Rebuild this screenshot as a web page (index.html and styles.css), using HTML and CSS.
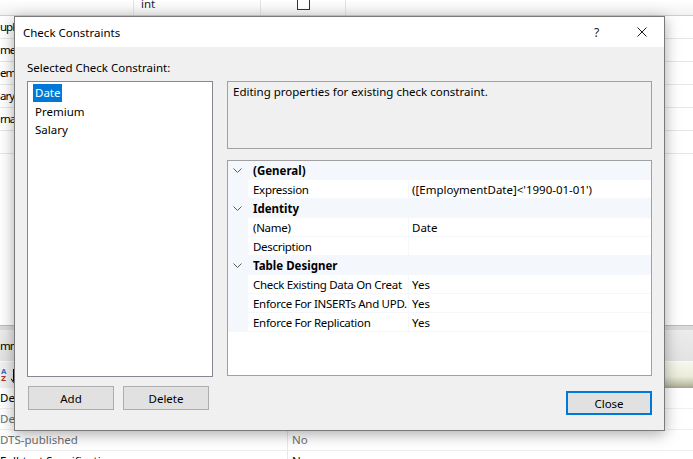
FILE: index.html
```html
<!DOCTYPE html>
<html>
<head>
<meta charset="utf-8">
<link rel="stylesheet" href="styles.css">
</head>
<body>
<div class="screen">
  <div class="bg">
    <div class="bg-top">
      <div class="tc tc1"></div>
      <div class="tc tc2"><span class="int">int</span></div>
      <div class="tc tc3"><span class="chk"></span></div>
      <div class="tc tc4"></div>
    </div>
    <div class="names">
      <div class="nrow">uplo</div>
      <div class="nrow">me</div>
      <div class="nrow">emi</div>
      <div class="nrow">ary</div>
      <div class="nrow">rna</div>
      <div class="nrow"></div>
    </div>
    <div class="blank"></div>
    <div class="sep"></div>
    <div class="tabrow"><span class="tabtext">mn</span></div>
    <div class="toolrow">
      <div class="tool-left">
        <span class="az"><span class="az-a">A</span><span class="az-z">Z</span></span>
        <svg class="az-arrow" width="5" height="14" viewBox="0 0 5 14"><path d="M2.5 0V12" stroke="#000" stroke-width="1"/><path d="M0 9.5L2.5 13.5L5 9.5" fill="none" stroke="#000" stroke-width="1"/></svg>
      </div>
      <div class="tool-right"></div>
    </div>
    <div class="props">
      <div class="prow"><span class="pl">Des</span><span class="pv"></span></div>
      <div class="prow muted"><span class="pl">Det</span><span class="pv"></span></div>
      <div class="prow muted"><span class="pl">DTS-published</span><span class="pv">No</span></div>
      <div class="prow"><span class="pl">Full-text Specification</span><span class="pv">No</span></div>
    </div>
  </div>

  <div class="dialog">
    <div class="titlebar">
      <span class="title">Check Constraints</span>
      <span class="tb-btn">?</span>
      <span class="tb-btn"><svg width="10" height="10" viewBox="0 0 10 10"><path d="M0.5 0.5L9.5 9.5M9.5 0.5L0.5 9.5" stroke="#1a1a1a" stroke-width="1"/></svg></span>
    </div>
    <div class="body">
      <div class="col-left">
        <div class="label">Selected Check Constraint:</div>
        <div class="listbox">
          <div class="item"><span class="sel">Date</span></div>
          <div class="item"><span>Premium</span></div>
          <div class="item"><span>Salary</span></div>
        </div>
        <div class="btn-row">
          <button class="btn">Add</button>
          <button class="btn">Delete</button>
        </div>
      </div>
      <div class="col-right">
        <div class="desc">Editing properties for existing check constraint.</div>
        <div class="grid">
          <div class="cat"><span class="gut"><svg width="9" height="5" viewBox="0 0 9 5"><path d="M0.5 0.5L4.5 4.5L8.5 0.5" fill="none" stroke="#5a5a5a" stroke-width="1"/></svg></span><span class="cname">(General)</span></div>
          <div class="prop"><span class="gut"></span><span class="pname">Expression</span><span class="pval">([EmploymentDate]&lt;'1990-01-01')</span></div>
          <div class="cat"><span class="gut"><svg width="9" height="5" viewBox="0 0 9 5"><path d="M0.5 0.5L4.5 4.5L8.5 0.5" fill="none" stroke="#5a5a5a" stroke-width="1"/></svg></span><span class="cname">Identity</span></div>
          <div class="prop"><span class="gut"></span><span class="pname">(Name)</span><span class="pval">Date</span></div>
          <div class="prop"><span class="gut"></span><span class="pname">Description</span><span class="pval"></span></div>
          <div class="cat"><span class="gut"><svg width="9" height="5" viewBox="0 0 9 5"><path d="M0.5 0.5L4.5 4.5L8.5 0.5" fill="none" stroke="#5a5a5a" stroke-width="1"/></svg></span><span class="cname">Table Designer</span></div>
          <div class="prop"><span class="gut"></span><span class="pname">Check Existing Data On Creat</span><span class="pval">Yes</span></div>
          <div class="prop"><span class="gut"></span><span class="pname">Enforce For INSERTs And UPD.</span><span class="pval">Yes</span></div>
          <div class="prop"><span class="gut"></span><span class="pname">Enforce For Replication</span><span class="pval">Yes</span></div>
        </div>
        <div class="close-row"><button class="btn btn-default">Close</button></div>
      </div>
    </div>
  </div>
</div>
</body>
</html>
```

FILE: styles.css
```css
* { box-sizing: border-box; margin: 0; padding: 0; }
html, body { width: 693px; height: 459px; overflow: hidden; }
body {
  font-family: "Noto Sans", "Open Sans", sans-serif;
  font-size: 11.5px;
  color: #000;
  background: #fff;
}
.screen { position: relative; width: 693px; height: 459px; overflow: hidden; }

/* background application */
.bg { display: flex; flex-direction: column; height: 472px; }
.bg-top {
  display: flex; height: 16px; flex-shrink: 0;
  border-bottom: 1px solid #cfcfcf;
  background: linear-gradient(#ffffff, #f2f2f2);
}
.tc { height: 15px; border-right: 1px solid #e2e2e2; overflow: hidden; }
.tc1 { width: 134px; }
.tc2 { width: 127px; padding-left: 7px; }
.tc3 { width: 85px; padding-left: 36px; }
.tc4 { flex: 1; border-right: none; }
.int { display: block; line-height: 10px; margin-top: -1px; color: #1b1b3a; }
.chk { display: block; width: 13px; height: 13px; margin-top: -3px; border: 1px solid #333; background: #fff; }

.names { flex-shrink: 0; }
.nrow {
  height: 23px; line-height: 22px; border-bottom: 1px solid #e6e6e6;
  color: #000; white-space: nowrap; overflow: hidden; letter-spacing: -1px;
}
.blank { height: 171px; flex-shrink: 0; }
.sep { height: 5px; flex-shrink: 0; border-top: 1px solid #bcbcbc; background: #dadada; }
.tabrow {
  height: 32px; flex-shrink: 0; display: flex; align-items: center;
  background: linear-gradient(#ececec, #e2e2e2);
  border-bottom: 1px solid #fafafa;
}
.tabtext { letter-spacing: -1px; }
.toolrow { height: 26px; flex-shrink: 0; display: flex; }
.tool-left { flex: 1; background: #f0f0f0; display: flex; align-items: center; padding-top: 2px; }
.tool-right { width: 28px; background: linear-gradient(#f6f6ec, #ececdc 55%, #c2c2ab 85%, #a3a38d); }
.az { display: inline-flex; flex-direction: column; width: 9px; font-family: "DejaVu Sans", sans-serif; font-size: 7px; line-height: 7px; font-weight: bold; margin-left: 1px; }
.az-a { color: #3a6fc4; }
.az-z { color: #b03030; }
.az-arrow { margin-left: 1px; }
.props { flex-shrink: 0; }
.prow { display: flex; height: 21px; line-height: 20px; border-bottom: 1px solid #efefef; white-space: nowrap; }
.prow.muted { color: #6d6d6d; }
.pl { width: 288px; border-right: 1px solid #e8e8e8; overflow: hidden; }
.pv { flex: 1; padding-left: 4px; }

/* dialog */
.dialog {
  position: absolute; left: 14px; top: 16px;
  width: 651px; height: 415px;
  border: 1px solid #7a7a7a;
  background: #f0f0f0;
  box-shadow: 0 3px 14px rgba(0, 0, 0, 0.34);
  display: flex; flex-direction: column;
}
.titlebar { height: 30px; background: #fff; display: flex; align-items: center; padding-left: 8px; }
.title { flex: 1; font-size: 11.5px; }
.tb-btn { width: 45px; height: 30px; display: flex; align-items: center; justify-content: center; font-size: 12px; color: #1a1a1a; }

.body { flex: 1; display: flex; gap: 14px; padding: 13px 12px 0 12px; }
.col-left { width: 186px; display: flex; flex-direction: column; }
.label { line-height: 16px; margin-bottom: 5px; }
.listbox { height: 296px; border: 1px solid #828790; background: #fff; padding: 2px 0 0 5px; }
.item { height: 18.5px; line-height: 18px; }
.item span { display: inline-block; padding: 0 2px; }
.item .sel { background: #0078d7; color: #fff; }
.btn-row { display: flex; gap: 9px; margin-top: 9px; padding-left: 1px; }
.btn {
  width: 86px; height: 24px;
  font-family: inherit; font-size: 11.5px; color: #000;
  background: #e1e1e1; border: 1px solid #adadad;
}
.btn-default { border: 2px solid #0078d7; }

.col-right { width: 425px; display: flex; flex-direction: column; margin-top: 21px; }
.desc { height: 68px; border: 1px solid #a0a0a0; padding: 2px 5px; line-height: 16px; }
.grid { height: 216px; margin-top: 11px; border: 1px solid #a0a0a0; background: #fff; }
.cat, .prop { display: flex; height: 19px; border-bottom: 1px solid #f4f7fc; line-height: 20px; white-space: nowrap; }
.cat { background: #f4f7fc; }
.gut { width: 20px; flex-shrink: 0; background: #f4f7fc; display: flex; align-items: center; padding-left: 5px; }
.gut svg { display: block; }
.cname { font-weight: bold; padding-left: 5px; }
.pname { width: 161px; flex-shrink: 0; padding-left: 5px; overflow: hidden; border-right: 1px solid #f4f7fc; letter-spacing: -0.3px; }
.pval { flex: 1; padding-left: 3px; overflow: hidden; }
.close-row { display: flex; justify-content: flex-end; margin-top: 15px; }
```
